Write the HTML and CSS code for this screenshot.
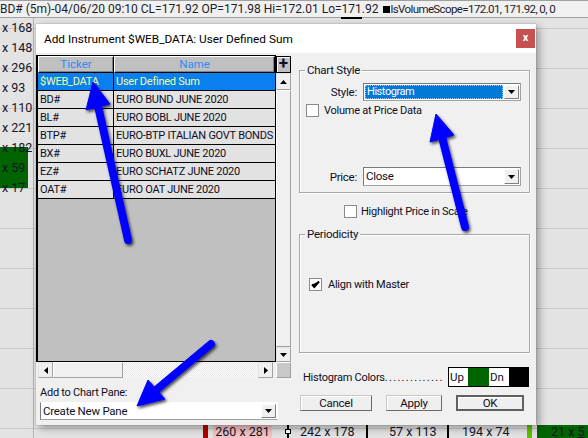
FILE: index.html
```html
<!DOCTYPE html>
<html>
<head>
<meta charset="utf-8">
<link rel="stylesheet" href="styles.css">
</head>
<body>
<div class="screen">
  <div class="topbar"><span>BD# (5m)-04/06/20 09:10 CL=171.92 OP=171.98 Hi=172.01 Lo=171.92 </span><span class="sq"></span><span class="scope">lsVolumeScope=172.01, 171.92, 0, 0</span></div>
  <div class="chart">
    <div class="scale">
      <div class="vol"></div>
      <div class="lbl">x 168</div>
      <div class="lbl">x 148</div>
      <div class="lbl">x 296</div>
      <div class="lbl">x 93</div>
      <div class="lbl">x 110</div>
      <div class="lbl">x 221</div>
      <div class="lbl">x 182</div>
      <div class="lbl">x 59</div>
      <div class="lbl">x 17</div>
    </div>
    <div class="mark"></div>
    <div class="c-red"></div>
    <div class="c-pink">260 x 281</div>
    <div class="c-wick"></div>
    <div class="c-tick"></div>
    <div class="c-txt t1">242 x 178</div>
    <div class="c-line l1"></div>
    <div class="c-txt t2">57 x 113</div>
    <div class="c-line l2"></div>
    <div class="c-txt t3">194 x 74</div>
    <div class="c-lime"></div>
    <div class="c-green">21 x <u>5</u></div>
  </div>

  <div class="dialog">
    <div class="titlebar">
      <span class="title">Add Instrument $WEB_DATA: User Defined Sum</span>
      <span class="close">x</span>
    </div>
    <div class="dlg-body">
      <div class="left">
        <div class="grid">
          <div class="grid-top">
            <div class="cells">
              <div class="hd">Ticker</div><div class="hd">Name</div>
              <div class="c tk sel">$WEB_DATA</div><div class="c nm sel">User Defined Sum</div>
              <div class="c tk">BD#</div><div class="c nm">EURO BUND JUNE 2020</div>
              <div class="c tk">BL#</div><div class="c nm">EURO BOBL JUNE 2020</div>
              <div class="c tk">BTP#</div><div class="c nm">EURO-BTP ITALIAN GOVT BONDS</div>
              <div class="c tk">BX#</div><div class="c nm">EURO BUXL JUNE 2020</div>
              <div class="c tk">EZ#</div><div class="c nm">EURO SCHATZ JUNE 2020</div>
              <div class="c tk">OAT#</div><div class="c nm">EURO OAT JUNE 2020</div>
            </div>
            <div class="vscroll">
              <div class="plus">+</div>
              <div class="sb-btn"><svg width="7" height="4" viewBox="0 0 7 4"><path d="M0 4 L3.5 0 L7 4 Z"/></svg></div>
              <div class="sb-thumb"></div>
              <div class="sb-btn low"><svg width="7" height="4" viewBox="0 0 7 4"><path d="M0 0 L3.5 4 L7 0 Z"/></svg></div>
            </div>
          </div>
          <div class="hscroll">
            <div class="hbtn"><svg width="4" height="7" viewBox="0 0 4 7"><path d="M4 0 L0 3.5 L4 7 Z"/></svg></div>
            <div class="hthumb"></div>
            <div class="track"></div>
            <div class="hbtn"><svg width="4" height="7" viewBox="0 0 4 7"><path d="M0 0 L4 3.5 L0 7 Z"/></svg></div>
            <div class="corner"></div>
          </div>
        </div>
        <div class="pane-label">Add to Chart Pane:</div>
        <div class="combo wide"><span class="val">Create New Pane</span><span class="drop"><svg width="7" height="4" viewBox="0 0 7 4"><path d="M0 0 L3.5 4 L7 0 Z"/></svg></span></div>
      </div>

      <div class="right">
        <div class="group g1">
          <span class="legend">Chart Style</span>
          <div class="field style-row">
            <span class="flabel">Style:</span>
            <div class="combo"><span class="val selval">Histogram</span><span class="drop"><svg width="7" height="4" viewBox="0 0 7 4"><path d="M0 0 L3.5 4 L7 0 Z"/></svg></span></div>
          </div>
          <div class="check-row vap"><span class="box"></span><span>Volume at Price Data</span></div>
          <div class="field price-row">
            <span class="flabel">Price:</span>
            <div class="combo"><span class="val">Close</span><span class="drop"><svg width="7" height="4" viewBox="0 0 7 4"><path d="M0 0 L3.5 4 L7 0 Z"/></svg></span></div>
          </div>
        </div>
        <div class="check-row hl"><span class="box"></span><span>Highlight Price in Scale</span></div>
        <div class="group g2">
          <span class="legend">Periodicity</span>
          <div class="check-row align"><span class="box"><svg width="11" height="11" viewBox="0 0 11 11"><path d="M2 5.5 L4.3 8 L9 2.5" fill="none" stroke="#000" stroke-width="2"/></svg></span><span>Align with Master</span></div>
        </div>
        <div class="hist-row">
          <span>Histogram Colors<span class="dots">..............</span></span>
          <div class="swatches"><span class="sw up">Up</span><span class="sw green"></span><span class="sw dn">Dn</span><span class="sw black"></span></div>
        </div>
        <div class="buttons">
          <span class="btn cancel">Cancel</span>
          <span class="btn apply">Apply</span>
          <span class="btn ok">OK</span>
        </div>
      </div>
    </div>
  </div>

  <svg class="arrows" width="588" height="438" viewBox="0 0 588 438">
    <defs>
      <filter id="sh" x="-30%" y="-30%" width="160%" height="160%">
        <feDropShadow dx="1.5" dy="2" stdDeviation="1.8" flood-color="#000" flood-opacity="0.7"/>
      </filter>
    </defs>
    <g filter="url(#sh)" fill="#0000ff" stroke="#0000ff">
      <line x1="128" y1="240" x2="98" y2="106" stroke-width="8" stroke-linecap="round"/>
      <polygon points="93,82 110,104 86,110" stroke-width="1" stroke-linejoin="round"/>
    </g>
    <g filter="url(#sh)" fill="#0000ff" stroke="#0000ff">
      <line x1="465" y1="227" x2="442" y2="137" stroke-width="8" stroke-linecap="round"/>
      <polygon points="436,114 454,135 430,142" stroke-width="1" stroke-linejoin="round"/>
    </g>
    <g filter="url(#sh)" fill="#0000ff" stroke="#0000ff">
      <line x1="211" y1="344" x2="156" y2="390" stroke-width="8" stroke-linecap="round"/>
      <polygon points="137,406 148,380 165,399" stroke-width="1" stroke-linejoin="round"/>
    </g>
  </svg>
</div>
</body>
</html>
```
FILE: styles.css
```css
* { box-sizing: border-box; }
html, body { margin: 0; padding: 0; }
body {
  width: 588px;
  height: 438px;
  overflow: hidden;
  font-family: Roboto, "Liberation Sans", sans-serif;
  color: #000;
  background: #e3e3e3;
}
.screen {
  position: relative;
  width: 588px;
  height: 438px;
  display: flex;
  flex-direction: column;
}

/* ---------- background chart ---------- */
.topbar {
  height: 18px;
  flex: none;
  background: #f0f0f0;
  border-top: 1px solid #a0a0a0;
  border-bottom: 1px solid #a0a0a0;
  font-size: 12px;
  line-height: 15px;
  white-space: nowrap;
  overflow: hidden;
  color: #1c1c2c;
  display: flex;
  align-items: center;
}
.scope { font-size: 11.5px; letter-spacing: -0.6px; }
.sq {
  display: inline-block;
  width: 7px;
  height: 7px;
  background: #000;
  margin: 0 1px 0 4px;
}
.chart {
  position: relative;
  flex: 1;
  background: repeating-linear-gradient(to bottom, transparent 0 10px, #c9c9c9 10px 11px, transparent 11px 40px);
}
.scale {
  position: relative;
  width: 34px;
  height: 100%;
  border-right: 1px solid #b4b4b4;
  display: flex;
  flex-direction: column;
}
.vol {
  position: absolute;
  left: 0;
  top: 129px;
  width: 28px;
  height: 41px;
  background: #006400;
}
.lbl {
  position: relative;
  height: 20px;
  line-height: 20px;
  font-size: 12.5px;
  padding-left: 2px;
  color: #14142a;
  white-space: nowrap;
}
.mark {
  position: absolute;
  left: 341px;
  top: -1px;
  width: 21px;
  height: 2px;
  background: #000;
}
.c-red, .c-pink, .c-wick, .c-tick, .c-txt, .c-line, .c-lime, .c-green {
  position: absolute;
  top: 407px;
  height: 14px;
}
.c-red { left: 203px; width: 5px; background: #b00000; }
.c-pink {
  left: 213px; width: 59px; background: #f4c3c3;
  font-size: 12.5px; line-height: 14px; text-align: center; color: #14142a;
}
.c-wick { left: 287px; width: 2px; background: #000; }
.c-tick { left: 285px; top: 411px; width: 6px; height: 5px; border: 1px solid #000; background: #fff; }
.c-txt { font-size: 12.5px; line-height: 14px; color: #14142a; white-space: nowrap; }
.t1 { left: 300px; }
.t2 { left: 389px; }
.t3 { left: 462px; }
.c-line { width: 2px; background: #000; }
.l1 { left: 366px; }
.l2 { left: 447px; }
.c-lime { left: 527px; width: 5px; background: #5fc000; }
.c-green {
  left: 537px; width: 51px; background: #006400;
  font-size: 12.5px; line-height: 14px; padding-left: 14px; color: #14142a; white-space: nowrap;
}

/* ---------- dialog ---------- */
.dialog {
  position: absolute;
  left: 36px;
  top: 24px;
  width: 500px;
  height: 401px;
  background: #f0f0f0;
  box-shadow: 3px 3px 8px rgba(0,0,0,.35), 0 0 1px rgba(0,0,0,.4);
  display: flex;
  flex-direction: column;
}
.titlebar {
  height: 29px;
  flex: none;
  background: #fff;
  display: flex;
  align-items: center;
  justify-content: space-between;
  padding-left: 8px;
}
.title { font-size: 11.8px; color: #000; white-space: nowrap; }
.close {
  width: 19px;
  height: 19px;
  margin-right: 1px;
  background: #c75050;
  color: #fff;
  font-size: 11px;
  font-weight: bold;
  display: flex;
  align-items: center;
  justify-content: center;
  line-height: 1;
  padding-bottom: 2px;
}
.dlg-body { flex: 1; display: flex; font-size: 11px; letter-spacing: -0.25px; color: #0e0e24; }

/* left column */
.left { width: 255px; flex: none; padding-top: 2px; display: flex; flex-direction: column; }
.grid { height: 323px; display: flex; flex-direction: column; }
.grid-top { height: 307px; display: flex; }
.cells {
  width: 240px;
  height: 307px;
  background: #c0c0c0;
  border: 1px solid #000;
  border-left-width: 2px;
  display: grid;
  grid-template-columns: 76px 1fr;
  grid-template-rows: 17px;
  grid-auto-rows: 18px;
  align-content: start;
  overflow: hidden;
}
.hd {
  background: #c0c0c0;
  border-top: 1px solid #fff;
  border-left: 1px solid #fff;
  border-right: 1px solid #000;
  border-bottom: 1px solid #000;
  box-shadow: inset -1px -1px 0 #808080;
  color: #2f8cf4;
  text-align: center;
  line-height: 14px;
  font-size: 11.5px;
  letter-spacing: 0;
}
.c {
  background: #e2e2e2;
  border-bottom: 1px solid #000;
  padding-left: 2px;
  line-height: 17px;
  white-space: nowrap;
  overflow: hidden;
  color: #0e0e24;
}
.tk { border-right: 1px solid #000; }
.c.sel { background: #0a7ff0; color: #f4ff8c; }

.vscroll { width: 15px; display: flex; flex-direction: column; background: #f0f0f0; }
.plus {
  height: 17px;
  margin-top: 1px;
  border: 1px solid #000;
  background: #c0c0c0;
  box-shadow: inset 1px 1px 0 #fff;
  font-size: 17px;
  font-weight: bold;
  line-height: 13px;
  text-align: center;
  letter-spacing: 0;
}
.sb-btn, .hbtn {
  height: 17px;
  flex: none;
  background: #f0f0f0;
  border: 1px solid #e4e4e4;
  border-right-color: #a0a0a0;
  border-bottom-color: #a0a0a0;
  display: flex;
  align-items: center;
  justify-content: center;
}
.sb-btn.low { height: 15px; }
.hbtn { width: 15px; height: 16px; }
.sb-thumb, .hthumb {
  flex: 1;
  background: #f0f0f0;
  border: 1px solid #fff;
  border-right-color: #a0a0a0;
  border-bottom-color: #a0a0a0;
}
.hthumb { flex: none; width: 70px; }
.dialog svg path { fill: #000; }

.hscroll { height: 16px; display: flex; padding-left: 2px; overflow: hidden; }
.track {
  flex: 1;
  background: repeating-conic-gradient(#e6e6e6 0 25%, #ffffff 0 50%) 0 0 / 2px 2px;
}
.corner {
  width: 15px;
  flex: none;
  margin-left: 3px;
  background: #c8c8c8;
  border: 1px solid #a0a0a0;
  border-top-color: #fff;
  border-left-color: #fff;
}
.pane-label { margin: 8px 0 0 4px; line-height: 13px; }

.combo {
  display: flex;
  height: 18px;
  width: 158px;
  background: #fff;
  border: 1px solid #a0a0a0;
  border-top-color: #7a7a7a;
  border-left-color: #7a7a7a;
  align-items: stretch;
}
.combo .val {
  flex: 1;
  padding-left: 2px;
  line-height: 16px;
  white-space: nowrap;
}
.combo .drop {
  width: 15px;
  margin: 1px;
  background: #f0f0f0;
  border: 1px solid #fff;
  border-right-color: #808080;
  border-bottom-color: #808080;
  display: flex;
  align-items: center;
  justify-content: center;
}
.combo.wide { width: 238px; height: 18px; margin: 3px 0 0 4px; border-top-color: #fff; border-right-color: #fff; }
.combo.wide .val { font-size: 11.5px; }

/* right column */
.right { width: 231px; margin-left: 8px; padding-top: 17px; display: flex; flex-direction: column; }
.group {
  border: 1px solid #a8a8a8;
  box-shadow: inset 1px 1px 0 #fff, 1px 1px 0 #fff;
  display: flex;
  flex-direction: column;
}
.g1 { height: 123px; }
.g2 { height: 119px; margin-top: 16px; }
.legend {
  align-self: flex-start;
  margin: -8px 0 0 5px;
  padding: 0 2px;
  background: #f0f0f0;
  font-size: 11.5px;
  line-height: 14px;
}
.field { display: flex; align-items: center; }
.flabel { width: 57px; text-align: right; font-size: 11.5px; margin-right: 6px; }
.style-row { margin-top: 6px; }
.price-row { margin-top: 50px; }
.price-row .combo { height: 19px; }
.price-row .val { line-height: 17px; font-size: 11.5px; }
.combo .selval {
  margin: 1px 0 1px 1px;
  background: #0078d7;
  color: #fff;
  outline: 1px dotted #a0c8ff;
  outline-offset: -1px;
  line-height: 14px;
  letter-spacing: -0.45px;
}

.check-row { display: flex; align-items: center; height: 13px; white-space: nowrap; }
.box {
  width: 13px;
  height: 13px;
  flex: none;
  background: #fff;
  border: 1px solid #8a8a8a;
  margin-right: 5px;
  display: flex;
  align-items: center;
  justify-content: center;
}
.vap { margin: 3px 0 0 6px; }
.hl { margin: 12px 0 0 45px; }
.hl .box { margin-right: 4px; }
.align { margin: 37px 0 0 9px; }
.align .box { margin-right: 6px; }

.hist-row {
  display: flex;
  align-items: center;
  height: 20px;
  margin-top: 14px;
  padding-left: 4px;
  white-space: nowrap;
}
.dots { letter-spacing: 1.3px; }
.swatches { display: flex; margin-left: auto; margin-right: 1px; border: 1px solid #000; height: 20px; letter-spacing: 0; }
.sw { height: 18px; line-height: 18px; font-size: 11.5px; padding-left: 1px; }
.sw.up { width: 19px; background: #fff; }
.sw.green { width: 21px; background: #006400; }
.sw.dn { width: 20px; background: #fff; }
.sw.black { width: 19px; background: #000; }

.buttons { display: flex; margin-top: 8px; padding-left: 1px; }
.btn {
  height: 16px;
  background: #efefef;
  border: 1px solid #c8c8c8;
  border-right-color: #6a6a6a;
  border-bottom-color: #6a6a6a;
  box-shadow: inset 1px 1px 0 #fff;
  font-size: 11.5px;
  line-height: 14px;
  text-align: center;
}
.cancel { width: 72px; }
.apply { width: 56px; margin-left: 14px; }
.ok { width: 68px; margin-left: 14px; border: 2px solid #606060; line-height: 12px; }

.arrows { position: absolute; left: 0; top: 0; pointer-events: none; }
```
